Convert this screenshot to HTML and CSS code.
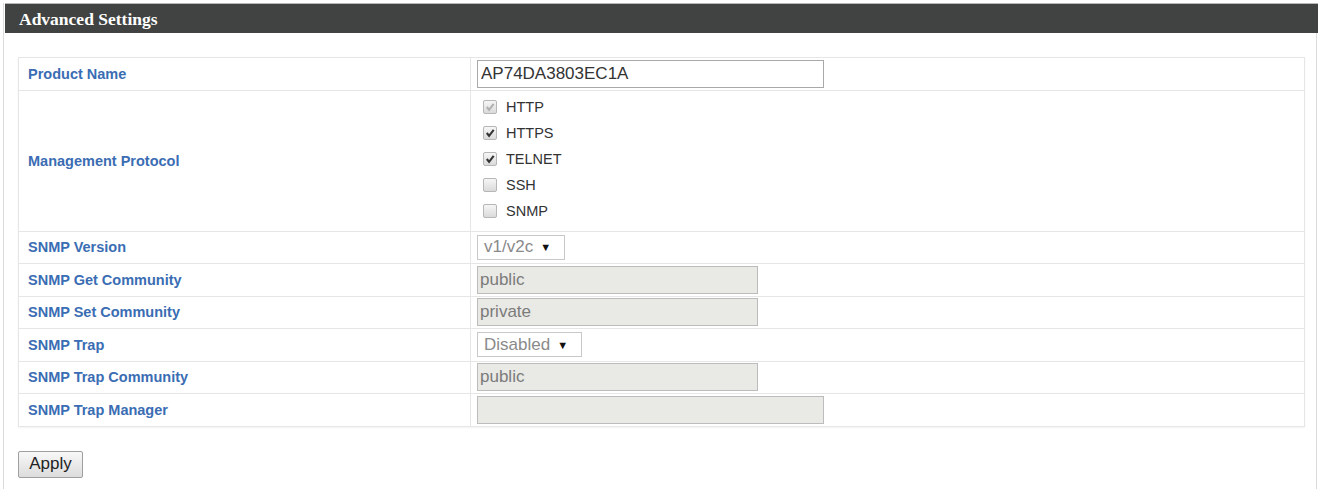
FILE: index.html
```html
<!DOCTYPE html>
<html lang="en">
<head>
    <meta charset="UTF-8">
    <title>Advanced Settings</title>
    <link rel="stylesheet" href="styles.css">
</head>
<body>
    <div class="panel">
        <div class="panel-title">Advanced Settings</div>
        <div class="panel-body">
            <table class="settings">
                <tr>
                    <td class="label">Product Name</td>
                    <td class="field"><input type="text" class="text long" value="AP74DA3803EC1A"></td>
                </tr>
                <tr>
                    <td class="label">Management Protocol</td>
                    <td class="field protocols">
                        <label class="check"><span class="box disabled"><svg viewBox="0 0 13 13"><path d="M3 6.5 L5.5 9.5 L10.5 3"/></svg></span>HTTP</label>
                        <label class="check"><span class="box"><svg viewBox="0 0 13 13"><path d="M3 6.5 L5.5 9.5 L10.5 3"/></svg></span>HTTPS</label>
                        <label class="check"><span class="box"><svg viewBox="0 0 13 13"><path d="M3 6.5 L5.5 9.5 L10.5 3"/></svg></span>TELNET</label>
                        <label class="check"><span class="box"></span>SSH</label>
                        <label class="check"><span class="box"></span>SNMP</label>
                    </td>
                </tr>
                <tr>
                    <td class="label">SNMP Version</td>
                    <td class="field"><div class="select version">v1/v2c <span class="arrow">&#9660;</span></div></td>
                </tr>
                <tr>
                    <td class="label">SNMP Get Community</td>
                    <td class="field"><input type="text" class="text short" value="public" disabled></td>
                </tr>
                <tr>
                    <td class="label">SNMP Set Community</td>
                    <td class="field"><input type="text" class="text short" value="private" disabled></td>
                </tr>
                <tr>
                    <td class="label">SNMP Trap</td>
                    <td class="field"><div class="select trap">Disabled <span class="arrow">&#9660;</span></div></td>
                </tr>
                <tr>
                    <td class="label">SNMP Trap Community</td>
                    <td class="field"><input type="text" class="text short" value="public" disabled></td>
                </tr>
                <tr>
                    <td class="label">SNMP Trap Manager</td>
                    <td class="field"><input type="text" class="text long" value="" disabled></td>
                </tr>
            </table>
            <button type="button" class="apply">Apply</button>
        </div>
    </div>
</body>
</html>
```

FILE: styles.css
```css
body {
    margin: 0;
    background: #ffffff;
    font-family: "Liberation Sans", Arial, sans-serif;
}
.panel {
    margin: 3px 3px 0 3px;
    border-left: 1px solid #dcdcdc;
    border-right: 1px solid #dcdcdc;
    height: 486px;
    box-sizing: border-box;
}
.panel-title {
    height: 30px;
    line-height: 30px;
    background: #404342;
    border-top: 1px solid #b8b8b8;
    box-sizing: border-box;
    padding-left: 14px;
    margin-left: 1px;
    margin-right: -2px;
    color: #ffffff;
    font-family: "Liberation Serif", "Times New Roman", serif;
    font-weight: bold;
    font-size: 17.5px;
}
.panel-body {
    padding: 24px 11px 0 14px;
}
.settings {
    width: 100%;
    border-collapse: collapse;
    border: 1px solid #e4e4e4;
    box-shadow: 0 1px 2px rgba(0, 0, 0, 0.05);
}
.settings td {
    border: 1px solid #e6e6e6;
    height: 31.5px;
    padding: 0;
    vertical-align: middle;
}
.label {
    width: 442px;
    padding-left: 9px !important;
    color: #3a6db3;
    font-weight: bold;
    font-size: 14.5px;
}
.field {
    padding-left: 6px !important;
}
.text {
    display: block;
    height: 28px;
    box-sizing: border-box;
    margin: 0;
    padding: 0 3px;
    border: 1px solid #a9a9a9;
    border-radius: 0;
    font-family: "Liberation Sans", Arial, sans-serif;
    font-size: 17px;
    color: #333333;
    background: #ffffff;
}
.text.long {
    width: 347px;
}
.text.short {
    width: 281px;
}
.text:disabled {
    background: #e9e9e5;
    border-color: #bcbcbc;
    color: #7b7b7b;
    padding-left: 2px;
}
.protocols {
    padding: 3px 0 7px 6px !important;
}
.check {
    display: flex;
    align-items: center;
    height: 26px;
    font-size: 14.5px;
    color: #333333;
}
.box {
    width: 12px;
    height: 12px;
    margin: 0 9px 0 6px;
    border: 1px solid #b7b7b7;
    border-radius: 2px;
    background: linear-gradient(#f6f6f6, #dadada);
    display: flex;
}
.box svg {
    width: 12px;
    height: 12px;
}
.box path {
    fill: none;
    stroke: #333333;
    stroke-width: 2.2;
}
.box.disabled path {
    stroke: #b0b0b0;
}
.select {
    display: flex;
    align-items: center;
    height: 25px;
    box-sizing: border-box;
    border: 1px solid #c8c8c8;
    padding-left: 6px;
    font-size: 17px;
    color: #8a8a8a;
    background: #ffffff;
}
.select .arrow {
    color: #111111;
    font-size: 11px;
    margin-left: 7px;
}
.version {
    width: 88px;
}
.trap {
    width: 105px;
}
.apply {
    margin-top: 24px;
    width: 65px;
    height: 27px;
    padding: 0;
    border: 1px solid #9f9f9f;
    border-radius: 2px;
    background: linear-gradient(#f8f8f8, #dcdcdc);
    font-family: "Liberation Sans", Arial, sans-serif;
    font-size: 17px;
    color: #222222;
}
```
